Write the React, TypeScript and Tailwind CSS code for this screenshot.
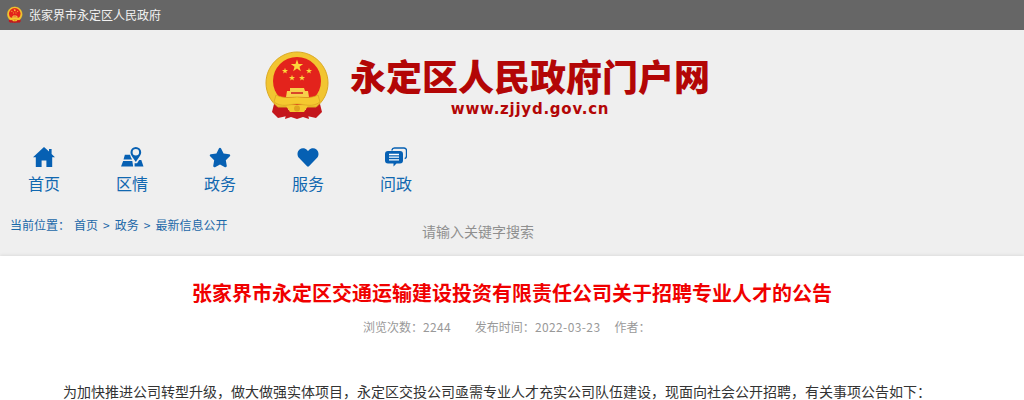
import { FaStar, FaHeart } from 'react-icons/fa'
import type { ReactNode } from 'react'

const cjk = "font-['Noto_Sans_CJK_SC','Liberation_Sans',sans-serif]"

const starPath = (cx: number, cy: number, r: number) => {
  const pts: string[] = []
  for (let i = 0; i < 10; i++) {
    const rad = i % 2 === 0 ? r : r * 0.4
    const a = (Math.PI / 5) * i - Math.PI / 2
    pts.push(`${(cx + rad * Math.cos(a)).toFixed(2)},${(cy + rad * Math.sin(a)).toFixed(2)}`)
  }
  return pts.join(' ')
}

function Emblem({ className }: { className: string }) {
  const stars: [number, number, number][] = [
    [32, 16, 6.5],
    [20, 21, 3.2],
    [44, 21, 3.2],
    [27, 28, 3.2],
    [37, 28, 3.2],
  ]
  return (
    <svg viewBox="0 0 66 72" className={className}>
      <path d="M10 50 L7 62 L13 68 L22 66 L24 56 Z" fill="#c4161c" />
      <path d="M54 50 L57 62 L51 68 L42 66 L40 56 Z" fill="#c4161c" />
      <path d="M22 60 H42 L44 69 L38 67 L32 69 L26 67 L20 69 Z" fill="#c4161c" />
      <path d="M32 2 C49 2 63 16 63 33 C63 43 58 52 51 57 H13 C6 52 1 43 1 33 C1 16 15 2 32 2 Z" fill="#f2c531" stroke="#dba923" strokeWidth="1" />
      <circle cx="32" cy="31" r="24" fill="#e3231c" />
      {stars.map(([x, y, r]) => (
        <polygon key={`${x}-${y}`} points={starPath(x, y, r)} fill="#fcd73b" />
      ))}
      <path d="M25 38 H39 L40 41 H43 L44 47 H21 L22 41 H25 Z" fill="#f7d04b" />
      <path d="M26 42 H38 V44 H26 Z" fill="#d9472b" />
      <path d="M11 45 C19 49 26 47 32 47 C38 47 45 49 53 45 L55 52 C47 58 40 54 32 54 C24 54 17 58 9 52 Z" fill="#f5c92f" stroke="#d9a21f" strokeWidth="0.7" />
      <path d="M21 56 H43 L39 62 H25 Z" fill="#f5c92f" />
      <circle cx="32" cy="58.5" r="3" fill="#dfa51f" />
    </svg>
  )
}

function HomeIcon() {
  return (
    <svg viewBox="0 0 22 20" className="h-5 w-[22px]" fill="#0660b3">
      <path d="M11 0 L16 4.6 V2 H18.6 V7 L22 10.2 H19.2 V20 H13.4 V13.4 H8.6 V20 H2.8 V10.2 H0 Z" />
    </svg>
  )
}

function MapIcon() {
  return (
    <svg viewBox="0 0 24 22" className="h-[21px] w-[23px]" fill="#0660b3">
      <path fillRule="evenodd" d="M15.5 0a5.6 5.6 0 0 1 5.6 5.6c0 2.6-2.2 5.2-5.6 10-3.4-4.8-5.6-7.4-5.6-10A5.6 5.6 0 0 1 15.5 0Zm0 2.2a3.4 3.4 0 1 0 0 6.8 3.4 3.4 0 0 0 0-6.8Z" />
      <path d="M4 8h5.4c.5 2 1.3 3.7 2.3 5H2.6ZM2.2 14.6h9.6l.9 5.9H0ZM14.2 17h2.6l2.2-3.4h2.2l2.3 6.9h-9.3Z" />
    </svg>
  )
}

function ChatIcon() {
  return (
    <svg viewBox="0 0 22 20" className="h-5 w-[22px]">
      <path d="M7 3.5V3a2.5 2.5 0 0 1 2.5-2H19a2.5 2.5 0 0 1 2.5 2.5V9c0 1.2-.6 2.2-1.8 2.6" fill="none" stroke="#0660b3" strokeWidth="1.4" />
      <path d="M3 4h12a3 3 0 0 1 3 3v6.5a3 3 0 0 1-3 3h-3.5L8.5 19.6V16.5H3a3 3 0 0 1-3-3V7a3 3 0 0 1 3-3Z" fill="#0660b3" />
      <path d="M4 7.5h10M4 10.2h10M4 12.9h10" stroke="#fff" strokeWidth="1.3" />
    </svg>
  )
}

const navItems: { label: string; icon: ReactNode }[] = [
  { label: '首页', icon: <HomeIcon /> },
  { label: '区情', icon: <MapIcon /> },
  { label: '政务', icon: <FaStar className="h-[21px] w-[22px] text-[#0660b3]" /> },
  { label: '服务', icon: <FaHeart className="h-[21px] w-[22px] text-[#0660b3]" /> },
  { label: '问政', icon: <ChatIcon /> },
]

export default function App() {
  return (
    <div className={`h-[400px] w-[1024px] overflow-hidden bg-[#efefef] ${cjk}`}>
      <div className="flex h-[30px] items-center bg-[#666666] pl-[7px]">
        <Emblem className="h-[18px] w-[16px]" />
        <span className="ml-[6px] text-xs text-[#f2f2f2]">张家界市永定区人民政府</span>
      </div>

      <div className="flex pl-[265px] pt-5">
        <Emblem className="h-[72px] w-[66px]" />
        <div className="ml-[19px] flex flex-col items-center">
          <div className="text-[36px] font-black leading-[50px] text-[#b30606]">永定区人民政府门户网</div>
          <div className="mt-[1px] font-['DejaVu_Sans',sans-serif] text-[15px] font-bold leading-[16px] tracking-[0.75px] text-[#b30606]">
            www.zjjyd.gov.cn
          </div>
        </div>
      </div>

      <div className="mt-[23px] flex">
        {navItems.map((item) => (
          <div key={item.label} className="flex w-[88px] flex-col items-center">
            <div className="flex h-[24px] items-center">{item.icon}</div>
            <div className="text-base leading-[28px] text-[#1168b0]">{item.label}</div>
          </div>
        ))}
      </div>

      <div className="relative mt-[18px] h-[41px] pl-[10px] text-xs leading-[20px] text-[#1b68a8]">
        <div className="flex">
          <span>当前位置：</span>
          <span className="ml-[4px] flex gap-[5px]">
            <span>首页</span>
            <span>&gt;</span>
            <span>政务</span>
            <span>&gt;</span>
            <span>最新信息公开</span>
          </span>
        </div>
        <div className="absolute left-[422px] top-[6px] text-sm leading-[20px] text-[#8f8f8f]">请输入关键字搜索</div>
      </div>

      <div className="h-[144px] bg-white shadow-[0_-1px_3px_rgba(0,0,0,0.08)]">
        <h1 className="pt-[23px] text-center text-xl font-bold leading-[28px] text-[#f00000]">
          张家界市永定区交通运输建设投资有限责任公司关于招聘专业人才的公告
        </h1>
        <div className="mt-[10px] flex pl-[363px] text-xs leading-[20px] text-[#999999]">
          <span>浏览次数：<span className="tracking-[0.3px]">2244</span></span>
          <span className="ml-6">发布时间：<span className="tracking-[0.4px]">2022-03-23</span></span>
          <span className="ml-[14px]">作者：</span>
        </div>
        <p className="mt-[45px] pl-[63px] text-sm leading-[18px] text-[#333333]">
          为加快推进公司转型升级，做大做强实体项目，永定区交投公司亟需专业人才充实公司队伍建设，现面向社会公开招聘，有关事项公告如下：
        </p>
      </div>
    </div>
  )
}
